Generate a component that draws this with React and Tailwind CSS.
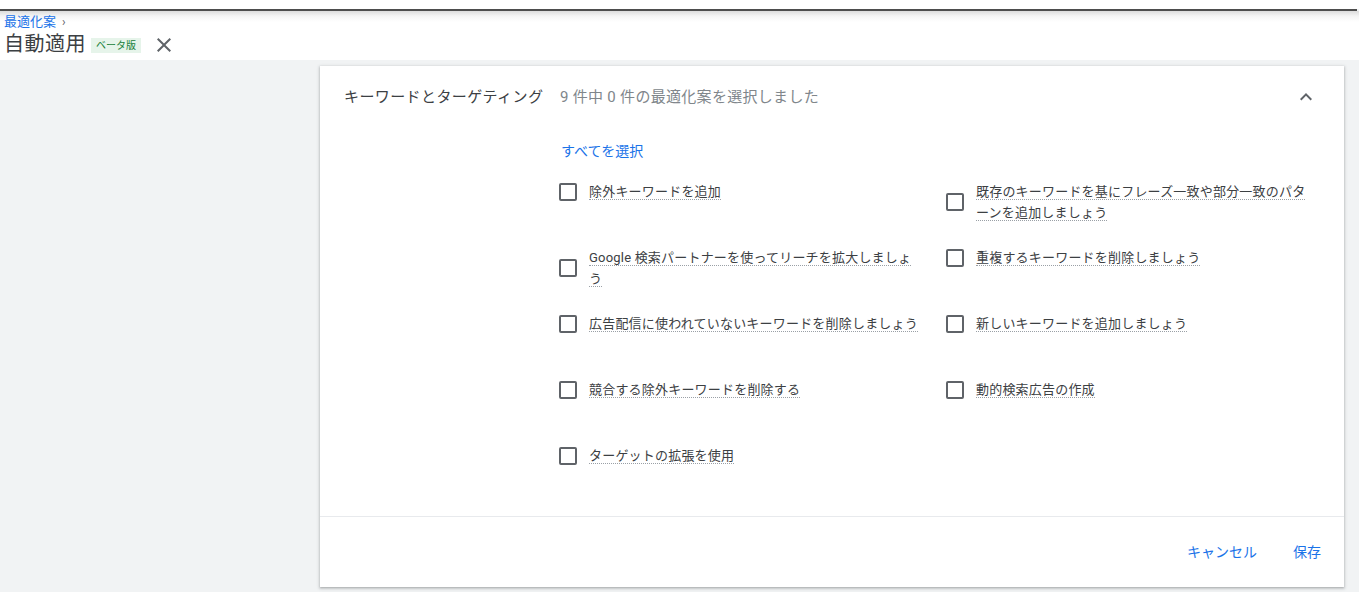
import React from "react";

const leftItems = [
    ["除外キーワードを追加"],
    ["Google 検索パートナーを使ってリーチを拡大しましょ", "う"],
    ["広告配信に使われていないキーワードを削除しましょう"],
    ["競合する除外キーワードを削除する"],
    ["ターゲットの拡張を使用"],
];

const rightItems = [
    ["既存のキーワードを基にフレーズ一致や部分一致のパタ", "ーンを追加しましょう"],
    ["重複するキーワードを削除しましょう"],
    ["新しいキーワードを追加しましょう"],
    ["動的検索広告の作成"],
];

const CheckItem = ({ lines }) => {
    return (
        <div className={"h-[66px] flex items-start"}>
            <div className={"flex flex-row items-center gap-x-3"}>
                <div className={"w-[18px] h-[18px] border-2 border-[#5f6368] rounded-[2px] shrink-0"}></div>
                <div className={"flex flex-col text-[13px] leading-[21px] text-[#3c4043] tracking-[0.2px] whitespace-nowrap"}>
                    {lines.map((l, i) => (
                        <div key={i}>
                            <span className={"border-b border-dotted border-[#9aa0a6]"}>{l}</span>
                        </div>
                    ))}
                </div>
            </div>
        </div>
    );
};

const App = () => {
    return (
        <div className={"w-[1359px] h-[592px] overflow-hidden bg-[#f1f3f4] font-['Roboto','Noto_Sans_CJK_JP',sans-serif]"}>
            {/*top strip*/}
            <div className={"h-[9px] bg-white"}></div>
            <div className={"h-[2px] bg-[#4d4d4d] mr-[2px]"}></div>
            {/*page header*/}
            <div className={"h-[49px] pl-1 pt-[3px] bg-[linear-gradient(to_bottom,#dcdcdc_0px,#f4f4f4_5px,#ffffff_11px)]"}>
                <div className={"flex flex-row items-center gap-x-[6px] text-[13px] leading-[16px]"}>
                    <span className={"text-[#1a73e8]"}>最適化案</span>
                    <span className={"text-[#5f6368] text-[12px]"}>›</span>
                </div>
                <div className={"flex flex-row items-center mt-[2px] h-[24px]"}>
                    <span className={"text-[20px] leading-[24px] text-[#3c4043] tracking-[0.5px]"}>自動適用</span>
                    <span className={"ml-[5px] bg-[#e6f4ea] text-[#188038] text-[10px] leading-[15px] px-[5px] mt-[2px]"}>ベータ版</span>
                    <svg className={"ml-[11px] mt-[2px]"} width="24" height="24" viewBox="0 0 24 24" fill="#5f6368">
                        <path d="M19 6.41L17.59 5 12 10.59 6.41 5 5 6.41 10.59 12 5 17.59 6.41 19 12 13.41 17.59 19 19 17.59 13.41 12z" />
                    </svg>
                </div>
            </div>

            {/*main*/}
            <div className={"pl-[320px] pt-[6px]"}>
                <div className={"w-[1024px] bg-white shadow-[0_1px_2px_rgba(60,64,67,0.3),0_1px_3px_1px_rgba(60,64,67,0.15)]"}>
                    {/*card head*/}
                    <div className={"h-[62px] flex flex-row items-center pl-6 pr-[26px]"}>
                        <span className={"w-[216px] text-[15px] text-[#3c4043] tracking-[0.4px]"}>キーワードとターゲティング</span>
                        <span className={"text-[15px] text-[#80868b] tracking-[0.3px] flex-1"}>9 件中 0 件の最適化案を選択しました</span>
                        <svg width="24" height="24" viewBox="0 0 24 24" fill="#5f6368">
                            <path d="M12 8l-6 6 1.41 1.41L12 10.83l4.59 4.58L18 14z" />
                        </svg>
                    </div>

                    {/*body*/}
                    <div className={"pl-[239px] pb-[5px]"}>
                        <div className={"mt-[13px] pl-[2px] text-[14px] leading-[20px] text-[#1a73e8]"}>すべてを選択</div>
                        <div className={"mt-[20px] grid grid-cols-[387px_1fr]"}>
                            <div className={"flex flex-col"}>
                                {leftItems.map((it, i) => (
                                    <CheckItem key={i} lines={it} />
                                ))}
                            </div>
                            <div className={"flex flex-col"}>
                                {rightItems.map((it, i) => (
                                    <CheckItem key={i} lines={it} />
                                ))}
                            </div>
                        </div>
                    </div>

                    {/*footer*/}
                    <div className={"h-[71px] border-t border-[#e8eaed] flex flex-row justify-end items-center pr-[15px] gap-x-5"}>
                        <button className={"px-2 h-9 text-[14px] text-[#1a73e8]"}>キャンセル</button>
                        <button className={"px-2 h-9 text-[14px] text-[#1a73e8]"}>保存</button>
                    </div>
                </div>
            </div>
        </div>
    );
};

export default App;
